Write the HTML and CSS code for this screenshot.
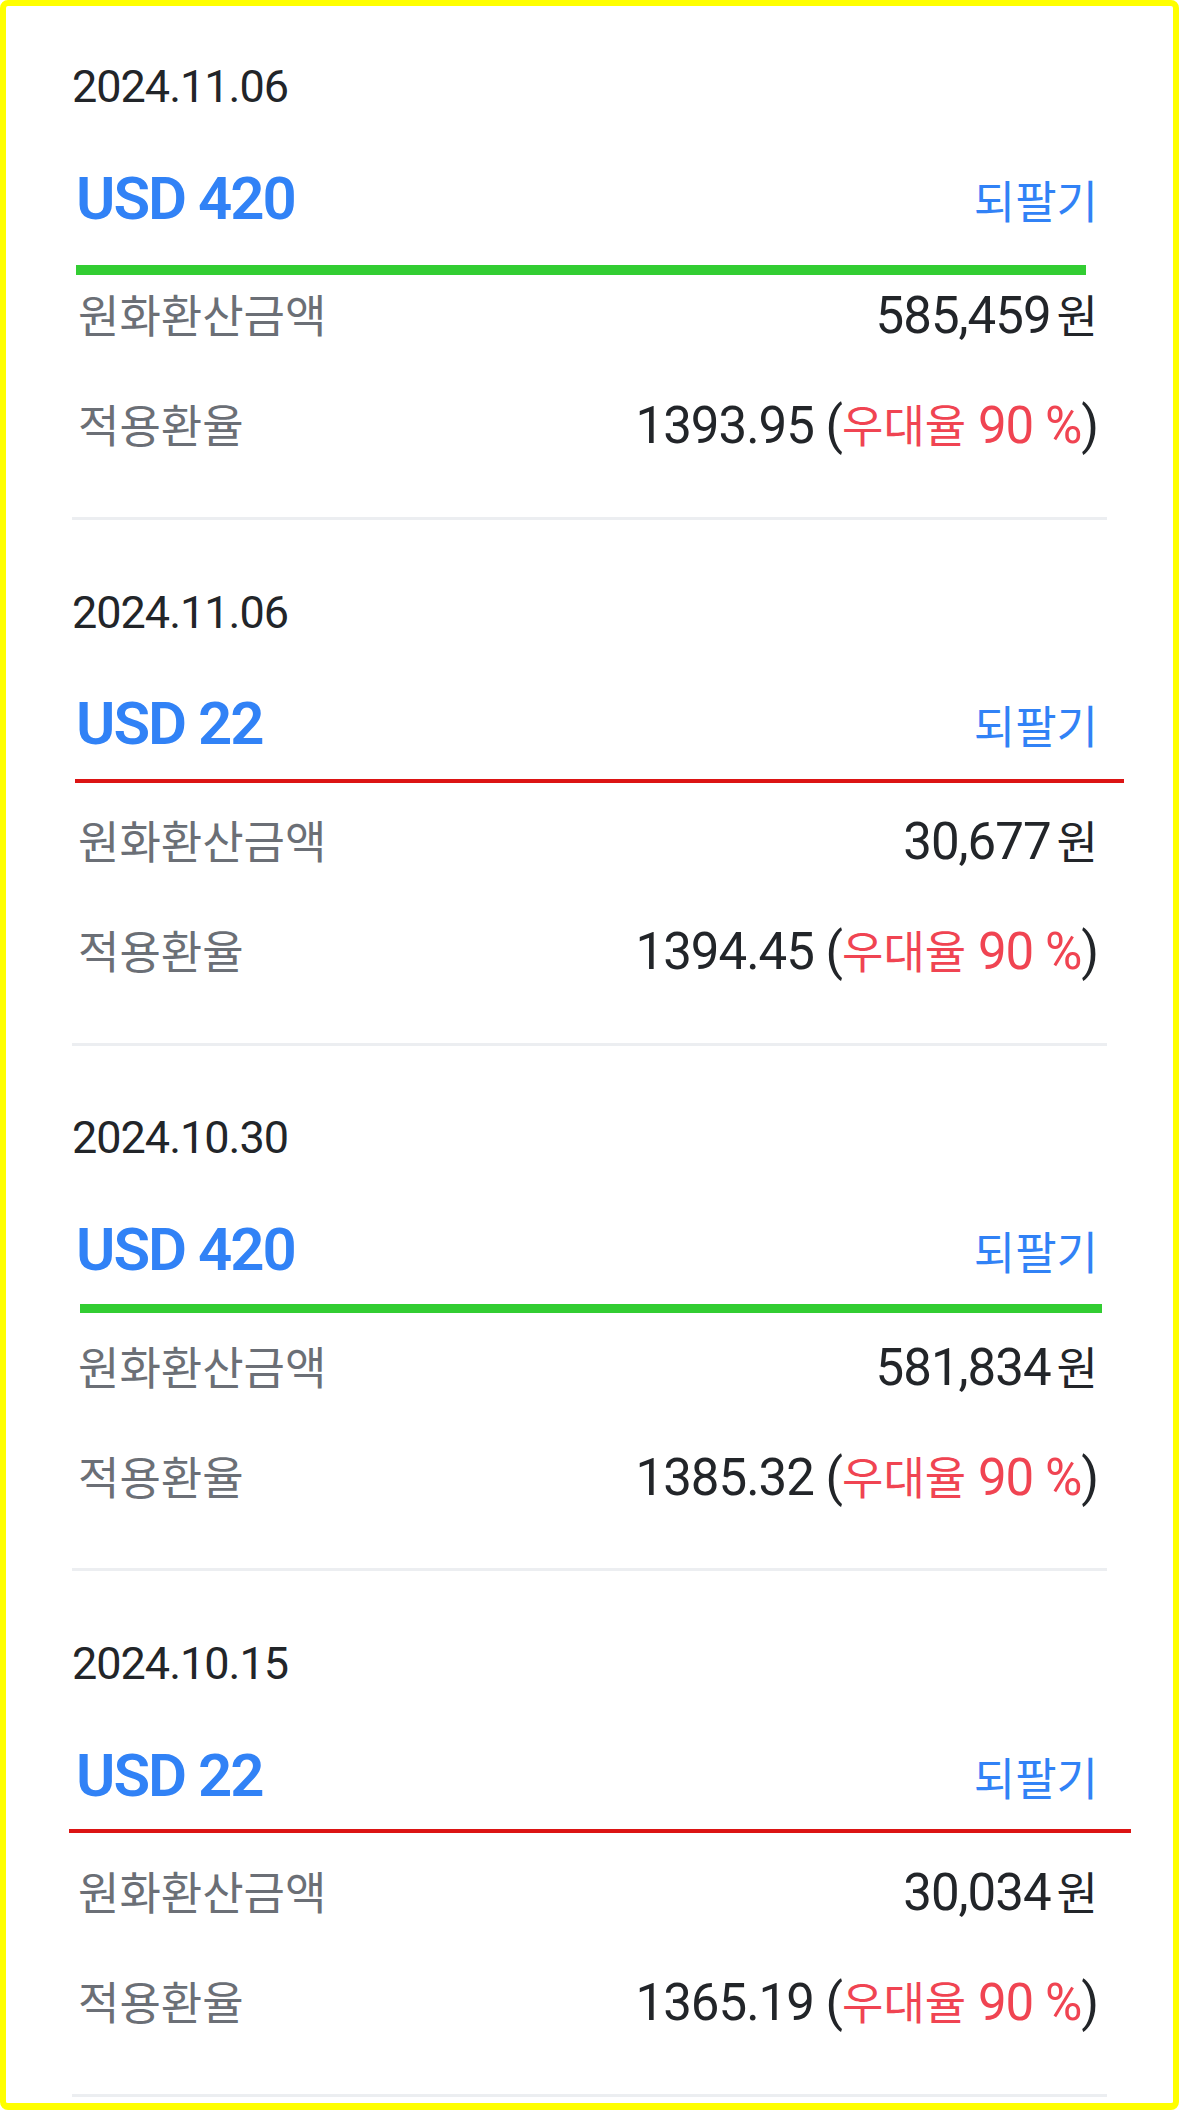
FILE: index.html
```html
<!DOCTYPE html>
<html lang="ko">
<head>
<meta charset="utf-8">
<title>되팔기 내역</title>
<link rel="stylesheet" href="styles.css">
</head>
<body>
<main class="list">
  <section class="item">
    <div class="date">2024.11.06</div>
    <div class="head"><span class="ccy">USD 420</span><span class="resell">되팔기</span></div>
    <div class="row row-first"><span class="label">원화환산금액</span><span class="value">585,459<span class="ko won">원</span></span></div>
    <div class="row"><span class="label">적용환율</span><span class="value">1393.95 (<span class="pref"><span class="ko">우대율</span> 90 %</span>)</span></div>
    <span class="mark mark-green mark-1"></span>
  </section>
  <section class="item">
    <div class="date">2024.11.06</div>
    <div class="head"><span class="ccy">USD 22</span><span class="resell">되팔기</span></div>
    <div class="row row-first"><span class="label">원화환산금액</span><span class="value">30,677<span class="ko won">원</span></span></div>
    <div class="row"><span class="label">적용환율</span><span class="value">1394.45 (<span class="pref"><span class="ko">우대율</span> 90 %</span>)</span></div>
    <span class="mark mark-red mark-2"></span>
  </section>
  <section class="item">
    <div class="date">2024.10.30</div>
    <div class="head"><span class="ccy">USD 420</span><span class="resell">되팔기</span></div>
    <div class="row row-first"><span class="label">원화환산금액</span><span class="value">581,834<span class="ko won">원</span></span></div>
    <div class="row"><span class="label">적용환율</span><span class="value">1385.32 (<span class="pref"><span class="ko">우대율</span> 90 %</span>)</span></div>
    <span class="mark mark-green mark-3"></span>
  </section>
  <section class="item">
    <div class="date">2024.10.15</div>
    <div class="head"><span class="ccy">USD 22</span><span class="resell">되팔기</span></div>
    <div class="row row-first"><span class="label">원화환산금액</span><span class="value">30,034<span class="ko won">원</span></span></div>
    <div class="row"><span class="label">적용환율</span><span class="value">1365.19 (<span class="pref"><span class="ko">우대율</span> 90 %</span>)</span></div>
    <span class="mark mark-red mark-4"></span>
  </section>
</main>
<div class="frame"></div>
</body>
</html>
```

FILE: styles.css
```css
* {
  box-sizing: border-box;
  margin: 0;
  padding: 0;
}

html, body {
  background: #ffffff;
}

body {
  width: 1179px;
  height: 2110px;
  overflow: hidden;
  font-family: Roboto, "Noto Sans CJK KR", sans-serif;
  color: #222529;
}

.list {
  margin-top: -5.67px;
  padding: 0 72px;
}

.item {
  position: relative;
  height: 525.67px;
  padding-top: 62.6px;
  border-bottom: 3px solid #eceef1;
}

.date {
  height: 60px;
  line-height: 60px;
  font-size: 45px;
  letter-spacing: -1px;
  color: #222529;
}

.head {
  display: flex;
  justify-content: space-between;
  align-items: baseline;
  height: 70px;
  line-height: 70px;
  margin-top: 46.9px;
  padding: 0 9px 0 4px;
}

.ccy {
  font-size: 60px;
  font-weight: 600;
  letter-spacing: -2px;
  color: #3182f6;
}

.resell {
  font-family: "Noto Sans CJK KR", sans-serif;
  font-size: 45px;
  color: #3182f6;
}

.row {
  display: flex;
  justify-content: space-between;
  align-items: baseline;
  height: 110px;
  line-height: 110px;
  padding: 0 9px 0 6px;
}

.row-first {
  margin-top: 25.5px;
}

.label {
  font-family: "Noto Sans CJK KR", sans-serif;
  font-size: 45px;
  color: #6b6f76;
}

.value {
  font-size: 51px;
  letter-spacing: -1px;
  color: #222529;
  white-space: nowrap;
}

.ko {
  font-family: "Noto Sans CJK KR", sans-serif;
  font-size: 45px;
  letter-spacing: 0;
}

.won {
  margin-left: 6px;
}

.pref {
  color: #f04452;
}

/* hand-drawn highlight marks laid over the list */
.mark {
  position: absolute;
  display: block;
}

.mark-green {
  background: #32cd32;
}

.mark-red {
  background: #dc1414;
}

.mark-1 {
  top: 270.7px;
  left: 4px;
  width: 1010px;
  height: 10px;
}

.mark-2 {
  top: 259.3px;
  left: 3px;
  width: 1049px;
  height: 4px;
}

.mark-3 {
  top: 258.3px;
  left: 8px;
  width: 1022px;
  height: 9.5px;
}

.mark-4 {
  top: 257.7px;
  left: -3px;
  width: 1062px;
  height: 3.5px;
}

.frame {
  position: fixed;
  inset: 0;
  border: 6px solid #ffff00;
  border-bottom-width: 7px;
  border-radius: 8px;
  pointer-events: none;
}
```
